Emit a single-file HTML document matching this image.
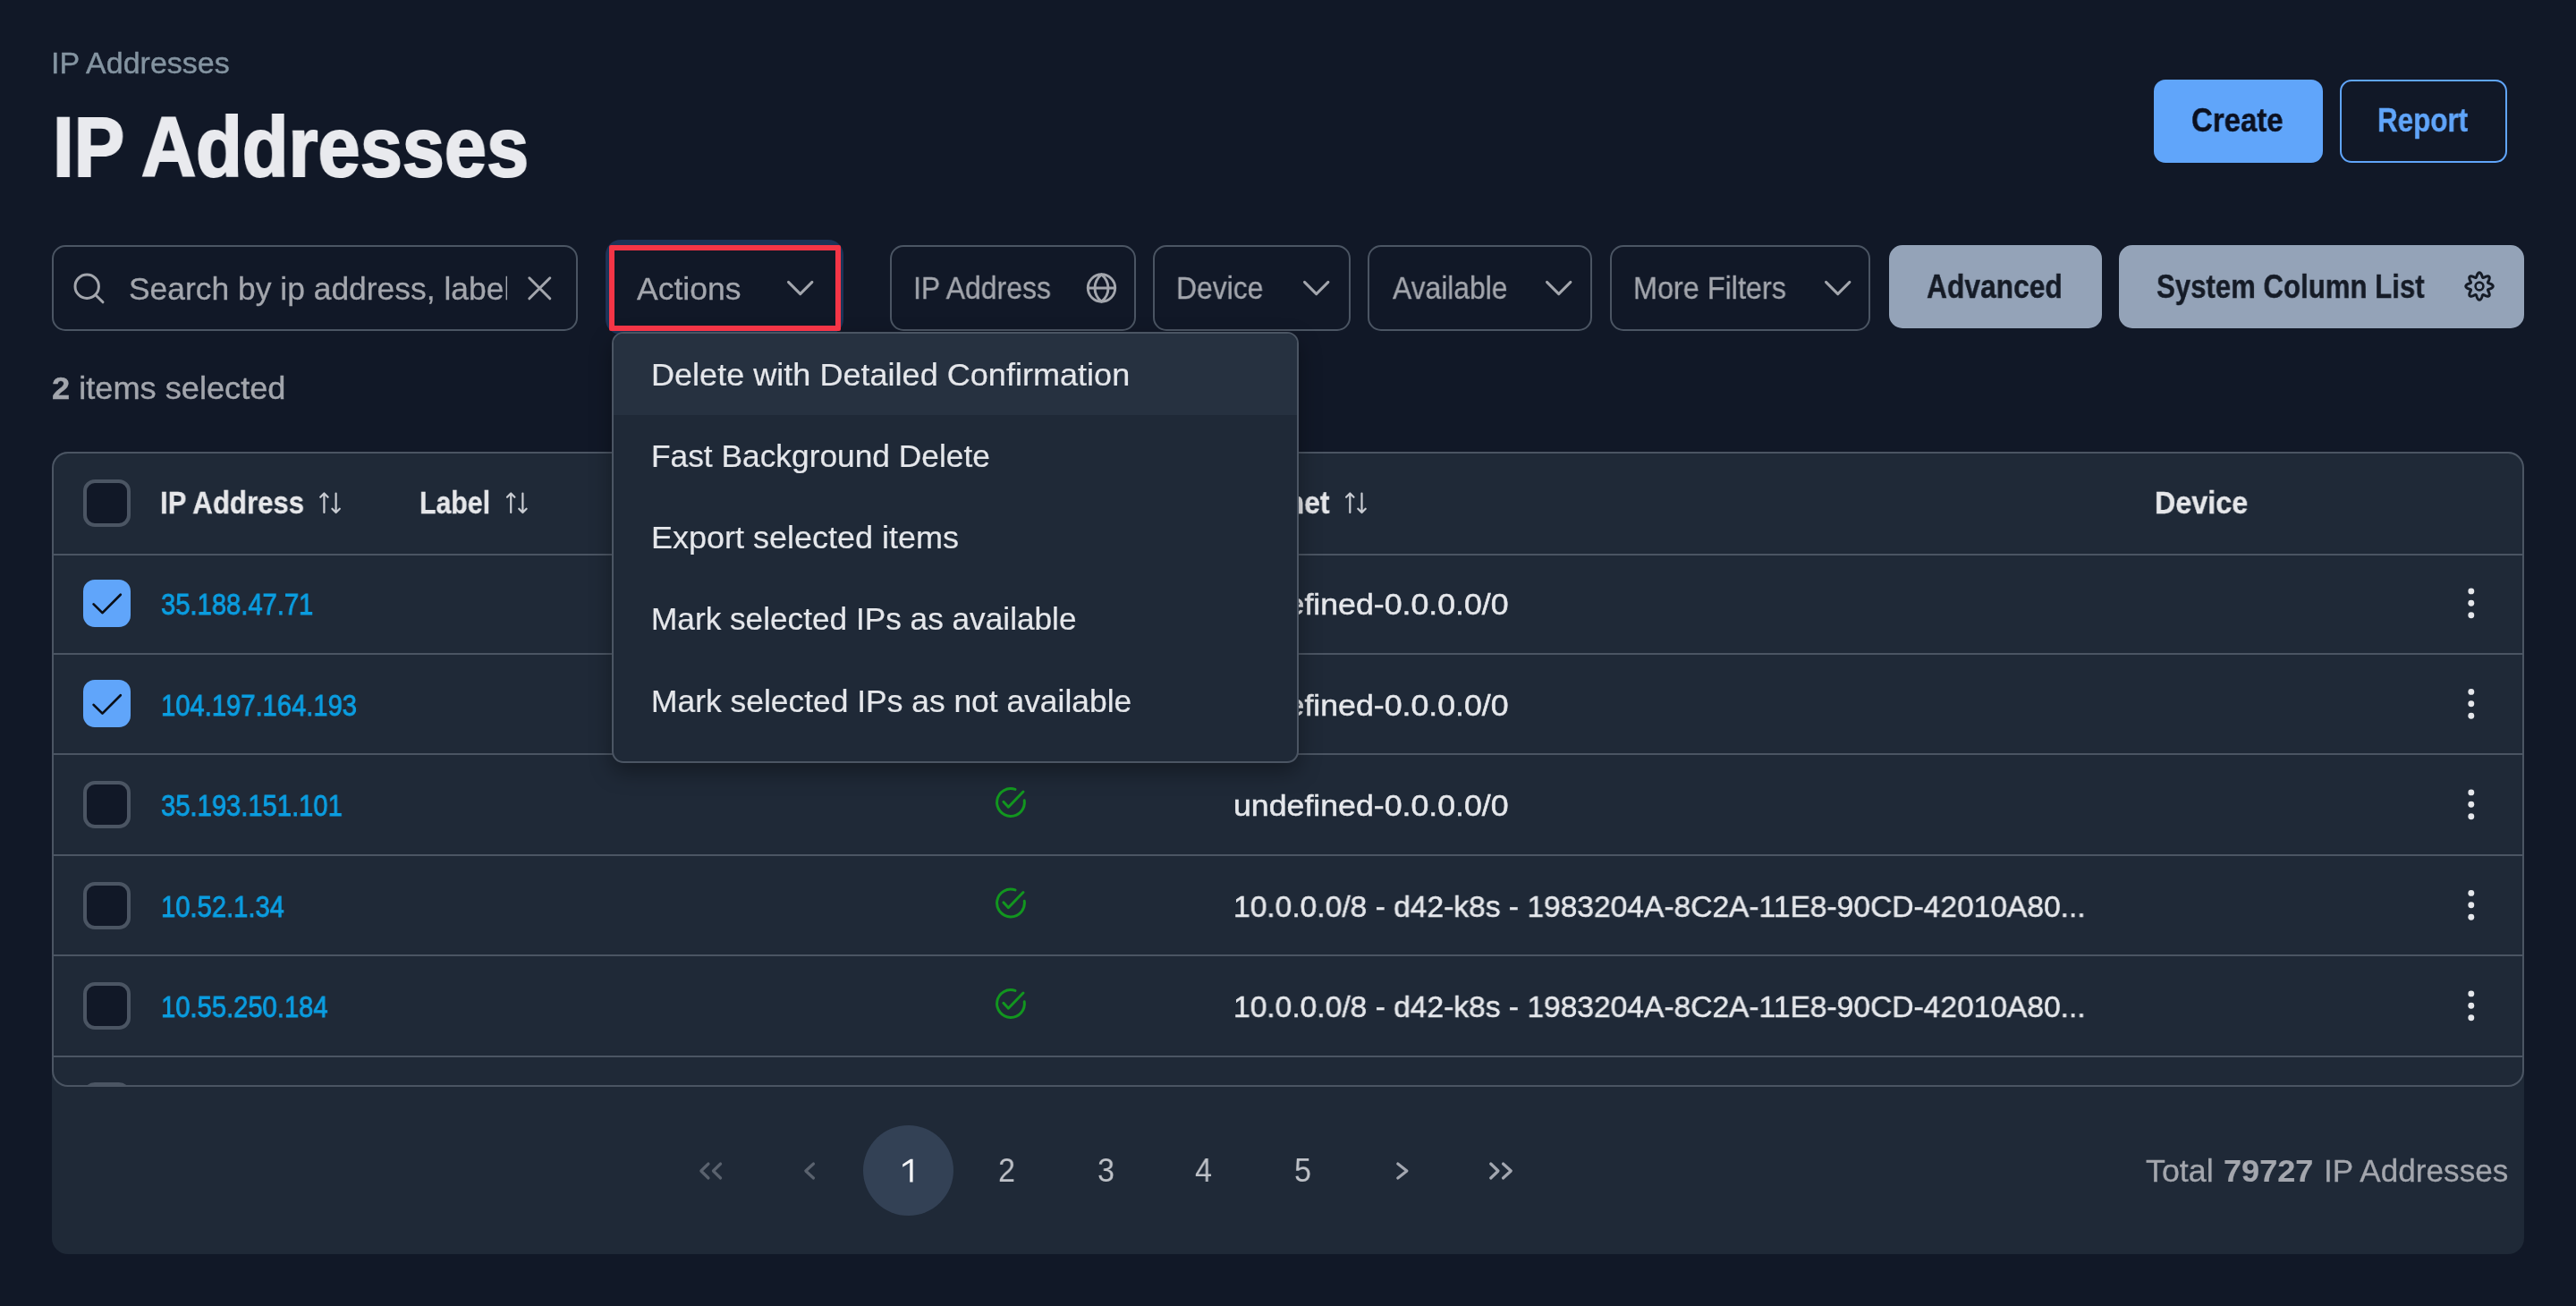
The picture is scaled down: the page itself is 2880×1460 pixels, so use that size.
<!DOCTYPE html>
<html><head><meta charset="utf-8"><title>IP Addresses</title>
<style>
html,body{margin:0;padding:0;background:#111827;}
body{width:2880px;height:1460px;position:relative;overflow:hidden;font-family:"Liberation Sans",sans-serif;}
body div, body span.t{position:absolute;}
span.t{white-space:nowrap;transform-origin:0 0;will-change:transform;}
svg{position:absolute;left:0;top:0;}
@media (max-width:2000px){html{zoom:0.5;}}
</style></head><body>
<span class="t" style="left:57.0px;top:53.2px;font-size:34px;line-height:34px;color:#8494a1;transform:scaleX(0.9980);-webkit-text-stroke:0.4px #8494a1;">IP Addresses</span>
<span class="t" style="left:58.5px;top:116.6px;font-size:95px;line-height:95px;color:#e9eaee;font-weight:700;transform:scaleX(0.8916);-webkit-text-stroke:2.2px #e9eaee;">IP Addresses</span>
<div style="left:2408px;top:89px;width:189px;height:93px;background:#60a5fa;border-radius:13px;"></div>
<span class="t" style="left:2450.0px;top:116.5px;font-size:36px;line-height:36px;color:#0b1020;font-weight:700;transform:scaleX(0.9161);-webkit-text-stroke:0.4px #0b1020;">Create</span>
<div style="left:2616px;top:89px;width:187px;height:93px;border:2px solid #60a5fa;border-radius:13px;box-sizing:border-box;"></div>
<span class="t" style="left:2657.5px;top:116.5px;font-size:36px;line-height:36px;color:#60a5fa;font-weight:700;transform:scaleX(0.8716);-webkit-text-stroke:0.4px #60a5fa;">Report</span>
<div style="left:58px;top:274px;width:588px;height:96px;border:2px solid #4b5563;border-radius:15px;box-sizing:border-box;"></div>
<div style="left:144px;top:290px;width:423px;height:60px;overflow:hidden;">
<span class="t" style="left:0.0px;top:15.4px;font-size:35px;line-height:35px;color:#a3a6ad;transform:scaleX(1.0120);-webkit-text-stroke:0.3px #a3a6ad;">Search by ip address, label</span>
</div>
<div style="left:677px;top:268px;width:266px;height:106px;background:#1d3357;border-radius:17px;"></div>
<div style="left:681px;top:274px;width:259px;height:96px;background:#111827;border:2px solid #3b82f6;border-radius:13px;box-sizing:border-box;"></div>
<span class="t" style="left:712.0px;top:304.9px;font-size:35px;line-height:35px;color:#a3a6ad;transform:scaleX(1.0148);-webkit-text-stroke:0.3px #a3a6ad;">Actions</span>
<div style="left:995px;top:274px;width:275px;height:96px;border:2px solid #4b5563;border-radius:15px;box-sizing:border-box;"></div>
<div style="left:1289px;top:274px;width:221px;height:96px;border:2px solid #4b5563;border-radius:15px;box-sizing:border-box;"></div>
<div style="left:1529px;top:274px;width:251px;height:96px;border:2px solid #4b5563;border-radius:15px;box-sizing:border-box;"></div>
<div style="left:1800px;top:274px;width:291px;height:96px;border:2px solid #4b5563;border-radius:15px;box-sizing:border-box;"></div>
<span class="t" style="left:1021.0px;top:304.4px;font-size:35px;line-height:35px;color:#a3a6ad;transform:scaleX(0.9124);-webkit-text-stroke:0.3px #a3a6ad;">IP Address</span>
<span class="t" style="left:1315.0px;top:304.4px;font-size:35px;line-height:35px;color:#a3a6ad;transform:scaleX(0.9103);-webkit-text-stroke:0.3px #a3a6ad;">Device</span>
<span class="t" style="left:1557.0px;top:304.4px;font-size:35px;line-height:35px;color:#a3a6ad;transform:scaleX(0.9078);-webkit-text-stroke:0.3px #a3a6ad;">Available</span>
<span class="t" style="left:1826.0px;top:304.4px;font-size:35px;line-height:35px;color:#a3a6ad;transform:scaleX(0.9254);-webkit-text-stroke:0.3px #a3a6ad;">More Filters</span>
<div style="left:2112px;top:274px;width:238px;height:93px;background:#94a3b8;border-radius:15px;"></div>
<div style="left:2369px;top:274px;width:453px;height:93px;background:#94a3b8;border-radius:15px;"></div>
<span class="t" style="left:2154.0px;top:302.5px;font-size:36px;line-height:36px;color:#151b26;font-weight:700;transform:scaleX(0.8826);-webkit-text-stroke:0.4px #151b26;">Advanced</span>
<span class="t" style="left:2411.0px;top:302.5px;font-size:36px;line-height:36px;color:#151b26;font-weight:700;transform:scaleX(0.8659);-webkit-text-stroke:0.4px #151b26;">System Column List</span>
<span class="t" style="left:58px;top:417.3px;font-size:34.5px;line-height:34.5px;color:#a3a6ad;transform:scaleX(1.049);-webkit-text-stroke:0.4px #a3a6ad;"><b>2</b> items selected</span>
<div style="left:58px;top:505px;width:2764px;height:897px;background:#1f2937;border-radius:18px;"></div>
<div style="left:58px;top:505px;width:2764px;height:710px;border:2px solid #4b5563;border-radius:18px;box-sizing:border-box;overflow:hidden;">
<div style="left:-2px;top:112px;width:2764px;height:2px;background:#4b5563;"></div>
<div style="left:-2px;top:223px;width:2764px;height:2px;background:#4b5563;"></div>
<div style="left:-2px;top:335px;width:2764px;height:2px;background:#4b5563;"></div>
<div style="left:-2px;top:448px;width:2764px;height:2px;background:#4b5563;"></div>
<div style="left:-2px;top:560px;width:2764px;height:2px;background:#4b5563;"></div>
<div style="left:-2px;top:673px;width:2764px;height:2px;background:#4b5563;"></div>
<div style="left:33px;top:703px;width:53px;height:53px;background:#111827;border:4px solid #4b5563;border-radius:13px;box-sizing:border-box;"></div>
</div>
<div style="left:93px;top:536px;width:53px;height:53px;background:#111827;border:4px solid #4b5563;border-radius:13px;box-sizing:border-box;"></div>
<span class="t" style="left:179.0px;top:544.4px;font-size:35px;line-height:35px;color:#e6e7ea;font-weight:700;transform:scaleX(0.8901);-webkit-text-stroke:0.3px #e6e7ea;">IP Address</span>
<span class="t" style="left:468.5px;top:544.4px;font-size:35px;line-height:35px;color:#e6e7ea;font-weight:700;transform:scaleX(0.8637);-webkit-text-stroke:0.3px #e6e7ea;">Label</span>
<span class="t" style="left:1379.0px;top:544.4px;font-size:35px;line-height:35px;color:#e6e7ea;font-weight:700;transform:scaleX(0.9050);-webkit-text-stroke:0.3px #e6e7ea;">Subnet</span>
<span class="t" style="left:2409.0px;top:544.4px;font-size:35px;line-height:35px;color:#e6e7ea;font-weight:700;transform:scaleX(0.9221);-webkit-text-stroke:0.3px #e6e7ea;">Device</span>
<div style="left:93px;top:648px;width:53px;height:53px;background:#60a5fa;border-radius:13px;"></div>
<span class="t" style="left:180.0px;top:658.4px;font-size:34px;line-height:34px;color:#0b9de0;transform:scaleX(0.8580);-webkit-text-stroke:0.9px #0b9de0;">35.188.47.71</span>
<span class="t" style="left:1379.0px;top:658.4px;font-size:34px;line-height:34px;color:#e5e7eb;transform:scaleX(1.0495);-webkit-text-stroke:0.5px #e5e7eb;">undefined-0.0.0.0/0</span>
<div style="left:93px;top:760px;width:53px;height:53px;background:#60a5fa;border-radius:13px;"></div>
<span class="t" style="left:180.0px;top:770.8px;font-size:34px;line-height:34px;color:#0b9de0;transform:scaleX(0.8580);-webkit-text-stroke:0.9px #0b9de0;">104.197.164.193</span>
<span class="t" style="left:1379.0px;top:770.8px;font-size:34px;line-height:34px;color:#e5e7eb;transform:scaleX(1.0495);-webkit-text-stroke:0.5px #e5e7eb;">undefined-0.0.0.0/0</span>
<div style="left:93px;top:873px;width:53px;height:53px;background:#111827;border:4px solid #4b5563;border-radius:13px;box-sizing:border-box;"></div>
<span class="t" style="left:180.0px;top:883.2px;font-size:34px;line-height:34px;color:#0b9de0;transform:scaleX(0.8580);-webkit-text-stroke:0.9px #0b9de0;">35.193.151.101</span>
<span class="t" style="left:1379.0px;top:883.2px;font-size:34px;line-height:34px;color:#e5e7eb;transform:scaleX(1.0495);-webkit-text-stroke:0.5px #e5e7eb;">undefined-0.0.0.0/0</span>
<div style="left:93px;top:986px;width:53px;height:53px;background:#111827;border:4px solid #4b5563;border-radius:13px;box-sizing:border-box;"></div>
<span class="t" style="left:180.0px;top:995.6px;font-size:34px;line-height:34px;color:#0b9de0;transform:scaleX(0.8580);-webkit-text-stroke:0.9px #0b9de0;">10.52.1.34</span>
<span class="t" style="left:1379.0px;top:995.6px;font-size:34px;line-height:34px;color:#e5e7eb;transform:scaleX(0.9870);-webkit-text-stroke:0.5px #e5e7eb;">10.0.0.0/8 - d42-k8s - 1983204A-8C2A-11E8-90CD-42010A80...</span>
<div style="left:93px;top:1098px;width:53px;height:53px;background:#111827;border:4px solid #4b5563;border-radius:13px;box-sizing:border-box;"></div>
<span class="t" style="left:180.0px;top:1108.0px;font-size:34px;line-height:34px;color:#0b9de0;transform:scaleX(0.8580);-webkit-text-stroke:0.9px #0b9de0;">10.55.250.184</span>
<span class="t" style="left:1379.0px;top:1108.0px;font-size:34px;line-height:34px;color:#e5e7eb;transform:scaleX(0.9870);-webkit-text-stroke:0.5px #e5e7eb;">10.0.0.0/8 - d42-k8s - 1983204A-8C2A-11E8-90CD-42010A80...</span>
<div style="left:684px;top:371px;width:768px;height:482px;background:#1f2937;border:2px solid #4b5563;border-radius:13px;box-sizing:border-box;box-shadow:0 10px 24px rgba(0,0,0,0.35);"></div>
<div style="left:686px;top:373px;width:764px;height:91px;background:#263140;border-radius:11px 11px 0 0;"></div>
<span class="t" style="left:728.0px;top:400.7px;font-size:35px;line-height:35px;color:#e5e7eb;transform:scaleX(1.0304);-webkit-text-stroke:0.2px #e5e7eb;">Delete with Detailed Confirmation</span>
<span class="t" style="left:728.0px;top:491.7px;font-size:35px;line-height:35px;color:#e5e7eb;transform:scaleX(1.0090);-webkit-text-stroke:0.2px #e5e7eb;">Fast Background Delete</span>
<span class="t" style="left:728.0px;top:582.8px;font-size:35px;line-height:35px;color:#e5e7eb;transform:scaleX(1.0281);-webkit-text-stroke:0.2px #e5e7eb;">Export selected items</span>
<span class="t" style="left:728.0px;top:674.3px;font-size:35px;line-height:35px;color:#e5e7eb;transform:scaleX(1.0059);-webkit-text-stroke:0.2px #e5e7eb;">Mark selected IPs as available</span>
<span class="t" style="left:728.0px;top:765.6px;font-size:35px;line-height:35px;color:#e5e7eb;transform:scaleX(1.0115);-webkit-text-stroke:0.2px #e5e7eb;">Mark selected IPs as not available</span>
<div style="left:965px;top:1258px;width:101px;height:101px;background:#334155;border-radius:50%;"></div>
<span class="t" style="left:1115.5px;top:1291.0px;font-size:36px;line-height:36px;color:#bfc2c8;transform:scaleX(0.9500);">2</span>
<span class="t" style="left:1226.5px;top:1291.0px;font-size:36px;line-height:36px;color:#bfc2c8;transform:scaleX(0.9500);">3</span>
<span class="t" style="left:1336.0px;top:1291.0px;font-size:36px;line-height:36px;color:#bfc2c8;transform:scaleX(0.9500);">4</span>
<span class="t" style="left:1446.5px;top:1291.0px;font-size:36px;line-height:36px;color:#bfc2c8;transform:scaleX(0.9500);">5</span>
<span class="t" style="left:2399.0px;top:1291.4px;font-size:35px;line-height:35px;color:#a3a6ad;transform:scaleX(1.0230);-webkit-text-stroke:0.3px #a3a6ad;">Total</span>
<span class="t" style="left:2486.0px;top:1291.4px;font-size:35px;line-height:35px;color:#a3a6ad;font-weight:700;transform:scaleX(1.0309);-webkit-text-stroke:0.2px #a3a6ad;">79727</span>
<span class="t" style="left:2597.5px;top:1291.4px;font-size:35px;line-height:35px;color:#a3a6ad;transform:scaleX(1.0034);-webkit-text-stroke:0.3px #a3a6ad;">IP Addresses</span>
<svg width="2880" height="1460" viewBox="0 0 2880 1460">
<circle cx="97.2" cy="320.2" r="13.2" stroke="#a3a6ad" stroke-width="3" fill="none"/>
<path d="M106.8 329.8 L115 337.8" stroke="#a3a6ad" stroke-width="3" fill="none" stroke-linecap="round" stroke-linejoin="round"/>
<path d="M591.8 310.8 L614.8 333.8 M614.8 310.8 L591.8 333.8" stroke="#a3a6ad" stroke-width="3" fill="none" stroke-linecap="round" stroke-linejoin="round"/>
<path d="M881.5 315.4 L894.7 328.6 L907.9 315.4" stroke="#a3a6ad" stroke-width="3" fill="none" stroke-linecap="round" stroke-linejoin="round"/>
<path d="M1458.5 315.4 L1471.7 328.6 L1484.9 315.4" stroke="#a3a6ad" stroke-width="3" fill="none" stroke-linecap="round" stroke-linejoin="round"/>
<path d="M1729.5 315.4 L1742.7 328.6 L1755.9 315.4" stroke="#a3a6ad" stroke-width="3" fill="none" stroke-linecap="round" stroke-linejoin="round"/>
<path d="M2041.5 315.4 L2054.7 328.6 L2067.9 315.4" stroke="#a3a6ad" stroke-width="3" fill="none" stroke-linecap="round" stroke-linejoin="round"/>
<circle cx="1231.5" cy="322" r="15.2" stroke="#a3a6ad" stroke-width="2.9" fill="none"/>
<path d="M1216.3 322 H1246.7" stroke="#a3a6ad" stroke-width="2.9" fill="none" stroke-linecap="round" stroke-linejoin="round"/>
<path d="M1231.5 306.8 C1221.5 315 1221.5 329 1231.5 337.2 C1241.5 329 1241.5 315 1231.5 306.8" stroke="#a3a6ad" stroke-width="2.9" fill="none" stroke-linecap="round" stroke-linejoin="round"/>
<path d="M2787.20 320.00 L2787.17 320.30 L2787.08 320.59 L2786.93 320.88 L2786.73 321.16 L2786.48 321.43 L2786.18 321.68 L2785.85 321.92 L2785.48 322.13 L2785.09 322.34 L2784.68 322.52 L2784.26 322.69 L2783.85 322.84 L2783.44 322.99 L2783.05 323.12 L2782.69 323.24 L2782.36 323.37 L2782.07 323.49 L2781.83 323.63 L2781.64 323.77 L2781.52 323.94 L2781.48 324.15 L2781.51 324.38 L2781.59 324.65 L2781.70 324.94 L2781.85 325.27 L2782.02 325.61 L2782.20 325.98 L2782.39 326.37 L2782.57 326.77 L2782.75 327.18 L2782.91 327.60 L2783.04 328.02 L2783.14 328.44 L2783.22 328.84 L2783.25 329.23 L2783.24 329.60 L2783.18 329.94 L2783.08 330.24 L2782.94 330.52 L2782.75 330.75 L2782.52 330.94 L2782.24 331.08 L2781.94 331.18 L2781.60 331.24 L2781.23 331.25 L2780.84 331.22 L2780.44 331.14 L2780.02 331.04 L2779.60 330.91 L2779.18 330.75 L2778.77 330.57 L2778.37 330.39 L2777.98 330.20 L2777.61 330.02 L2777.27 329.85 L2776.94 329.70 L2776.65 329.59 L2776.38 329.51 L2776.15 329.48 L2775.94 329.52 L2775.77 329.64 L2775.63 329.83 L2775.49 330.07 L2775.37 330.36 L2775.24 330.69 L2775.12 331.05 L2774.99 331.44 L2774.84 331.85 L2774.69 332.26 L2774.52 332.68 L2774.34 333.09 L2774.13 333.48 L2773.92 333.85 L2773.68 334.18 L2773.43 334.48 L2773.16 334.73 L2772.88 334.93 L2772.59 335.08 L2772.30 335.17 L2772.00 335.20 L2771.70 335.17 L2771.41 335.08 L2771.12 334.93 L2770.84 334.73 L2770.57 334.48 L2770.32 334.18 L2770.08 333.85 L2769.87 333.48 L2769.66 333.09 L2769.48 332.68 L2769.31 332.26 L2769.16 331.85 L2769.01 331.44 L2768.88 331.05 L2768.76 330.69 L2768.63 330.36 L2768.51 330.07 L2768.37 329.83 L2768.23 329.64 L2768.06 329.52 L2767.85 329.48 L2767.62 329.51 L2767.35 329.59 L2767.06 329.70 L2766.73 329.85 L2766.39 330.02 L2766.02 330.20 L2765.63 330.39 L2765.23 330.57 L2764.82 330.75 L2764.40 330.91 L2763.98 331.04 L2763.56 331.14 L2763.16 331.22 L2762.77 331.25 L2762.40 331.24 L2762.06 331.18 L2761.76 331.08 L2761.48 330.94 L2761.25 330.75 L2761.06 330.52 L2760.92 330.24 L2760.82 329.94 L2760.76 329.60 L2760.75 329.23 L2760.78 328.84 L2760.86 328.44 L2760.96 328.02 L2761.09 327.60 L2761.25 327.18 L2761.43 326.77 L2761.61 326.37 L2761.80 325.98 L2761.98 325.61 L2762.15 325.27 L2762.30 324.94 L2762.41 324.65 L2762.49 324.38 L2762.52 324.15 L2762.48 323.94 L2762.36 323.77 L2762.17 323.63 L2761.93 323.49 L2761.64 323.37 L2761.31 323.24 L2760.95 323.12 L2760.56 322.99 L2760.15 322.84 L2759.74 322.69 L2759.32 322.52 L2758.91 322.34 L2758.52 322.13 L2758.15 321.92 L2757.82 321.68 L2757.52 321.43 L2757.27 321.16 L2757.07 320.88 L2756.92 320.59 L2756.83 320.30 L2756.80 320.00 L2756.83 319.70 L2756.92 319.41 L2757.07 319.12 L2757.27 318.84 L2757.52 318.57 L2757.82 318.32 L2758.15 318.08 L2758.52 317.87 L2758.91 317.66 L2759.32 317.48 L2759.74 317.31 L2760.15 317.16 L2760.56 317.01 L2760.95 316.88 L2761.31 316.76 L2761.64 316.63 L2761.93 316.51 L2762.17 316.37 L2762.36 316.23 L2762.48 316.06 L2762.52 315.85 L2762.49 315.62 L2762.41 315.35 L2762.30 315.06 L2762.15 314.73 L2761.98 314.39 L2761.80 314.02 L2761.61 313.63 L2761.43 313.23 L2761.25 312.82 L2761.09 312.40 L2760.96 311.98 L2760.86 311.56 L2760.78 311.16 L2760.75 310.77 L2760.76 310.40 L2760.82 310.06 L2760.92 309.76 L2761.06 309.48 L2761.25 309.25 L2761.48 309.06 L2761.76 308.92 L2762.06 308.82 L2762.40 308.76 L2762.77 308.75 L2763.16 308.78 L2763.56 308.86 L2763.98 308.96 L2764.40 309.09 L2764.82 309.25 L2765.23 309.43 L2765.63 309.61 L2766.02 309.80 L2766.39 309.98 L2766.73 310.15 L2767.06 310.30 L2767.35 310.41 L2767.62 310.49 L2767.85 310.52 L2768.06 310.48 L2768.23 310.36 L2768.37 310.17 L2768.51 309.93 L2768.63 309.64 L2768.76 309.31 L2768.88 308.95 L2769.01 308.56 L2769.16 308.15 L2769.31 307.74 L2769.48 307.32 L2769.66 306.91 L2769.87 306.52 L2770.08 306.15 L2770.32 305.82 L2770.57 305.52 L2770.84 305.27 L2771.12 305.07 L2771.41 304.92 L2771.70 304.83 L2772.00 304.80 L2772.30 304.83 L2772.59 304.92 L2772.88 305.07 L2773.16 305.27 L2773.43 305.52 L2773.68 305.82 L2773.92 306.15 L2774.13 306.52 L2774.34 306.91 L2774.52 307.32 L2774.69 307.74 L2774.84 308.15 L2774.99 308.56 L2775.12 308.95 L2775.24 309.31 L2775.37 309.64 L2775.49 309.93 L2775.63 310.17 L2775.77 310.36 L2775.94 310.48 L2776.15 310.52 L2776.38 310.49 L2776.65 310.41 L2776.94 310.30 L2777.27 310.15 L2777.61 309.98 L2777.98 309.80 L2778.37 309.61 L2778.77 309.43 L2779.18 309.25 L2779.60 309.09 L2780.02 308.96 L2780.44 308.86 L2780.84 308.78 L2781.23 308.75 L2781.60 308.76 L2781.94 308.82 L2782.24 308.92 L2782.52 309.06 L2782.75 309.25 L2782.94 309.48 L2783.08 309.76 L2783.18 310.06 L2783.24 310.40 L2783.25 310.77 L2783.22 311.16 L2783.14 311.56 L2783.04 311.98 L2782.91 312.40 L2782.75 312.82 L2782.57 313.23 L2782.39 313.63 L2782.20 314.02 L2782.02 314.39 L2781.85 314.73 L2781.70 315.06 L2781.59 315.35 L2781.51 315.62 L2781.48 315.85 L2781.52 316.06 L2781.64 316.23 L2781.83 316.37 L2782.07 316.51 L2782.36 316.63 L2782.69 316.76 L2783.05 316.88 L2783.44 317.01 L2783.85 317.16 L2784.26 317.31 L2784.68 317.48 L2785.09 317.66 L2785.48 317.87 L2785.85 318.08 L2786.18 318.32 L2786.48 318.57 L2786.73 318.84 L2786.93 319.12 L2787.08 319.41 L2787.17 319.70 L2787.20 320.00Z" stroke="#151b26" stroke-width="3" fill="none" stroke-linecap="round" stroke-linejoin="round"/>
<circle cx="2772" cy="320" r="4.4" stroke="#151b26" stroke-width="2.6" fill="none"/>
<path d="M362.4 551.5 V573 M358.2 555.8 L362.4 551.5 L366.59999999999997 555.8" stroke="#c9ccd2" stroke-width="2.2" fill="none" stroke-linecap="round" stroke-linejoin="round"/>
<path d="M375.6 551.5 V573 M371.40000000000003 568.7 L375.6 573 L379.8 568.7" stroke="#c9ccd2" stroke-width="2.2" fill="none" stroke-linecap="round" stroke-linejoin="round"/>
<path d="M571.2 551.5 V573 M567.0 555.8 L571.2 551.5 L575.4000000000001 555.8" stroke="#c9ccd2" stroke-width="2.2" fill="none" stroke-linecap="round" stroke-linejoin="round"/>
<path d="M584.4000000000001 551.5 V573 M580.2 568.7 L584.4000000000001 573 L588.6000000000001 568.7" stroke="#c9ccd2" stroke-width="2.2" fill="none" stroke-linecap="round" stroke-linejoin="round"/>
<path d="M1509.3000000000002 551.5 V573 M1505.1000000000001 555.8 L1509.3000000000002 551.5 L1513.5000000000002 555.8" stroke="#c9ccd2" stroke-width="2.2" fill="none" stroke-linecap="round" stroke-linejoin="round"/>
<path d="M1522.5 551.5 V573 M1518.3 568.7 L1522.5 573 L1526.7 568.7" stroke="#c9ccd2" stroke-width="2.2" fill="none" stroke-linecap="round" stroke-linejoin="round"/>
<path d="M104.6 675.4 L114.5 685.1 L134.8 664.8" stroke="#0b0f17" stroke-width="2.7" fill="none" stroke-linecap="round" stroke-linejoin="round"/>
<path d="M104.6 787.9 L114.5 797.6 L134.8 777.3" stroke="#0b0f17" stroke-width="2.7" fill="none" stroke-linecap="round" stroke-linejoin="round"/>
<path d="M1145.25 894.86 A15.4 15.4 0 1 1 1135.01 882.44" stroke="#12961f" stroke-width="3" fill="none" stroke-linecap="round" stroke-linejoin="round"/>
<path d="M1121.9 896.30 L1127.4 902.20 L1144 885.00" stroke="#12961f" stroke-width="3" fill="none" stroke-linecap="round" stroke-linejoin="round"/>
<path d="M1145.25 1007.36 A15.4 15.4 0 1 1 1135.01 994.94" stroke="#12961f" stroke-width="3" fill="none" stroke-linecap="round" stroke-linejoin="round"/>
<path d="M1121.9 1008.80 L1127.4 1014.70 L1144 997.50" stroke="#12961f" stroke-width="3" fill="none" stroke-linecap="round" stroke-linejoin="round"/>
<path d="M1145.25 1119.86 A15.4 15.4 0 1 1 1135.01 1107.44" stroke="#12961f" stroke-width="3" fill="none" stroke-linecap="round" stroke-linejoin="round"/>
<path d="M1121.9 1121.30 L1127.4 1127.20 L1144 1110.00" stroke="#12961f" stroke-width="3" fill="none" stroke-linecap="round" stroke-linejoin="round"/>
<circle cx="2762.8" cy="660.9" r="3.45" fill="#e5e7eb"/>
<circle cx="2762.8" cy="674.3" r="3.45" fill="#e5e7eb"/>
<circle cx="2762.8" cy="687.7" r="3.45" fill="#e5e7eb"/>
<circle cx="2762.8" cy="773.4" r="3.45" fill="#e5e7eb"/>
<circle cx="2762.8" cy="786.8" r="3.45" fill="#e5e7eb"/>
<circle cx="2762.8" cy="800.2" r="3.45" fill="#e5e7eb"/>
<circle cx="2762.8" cy="885.9" r="3.45" fill="#e5e7eb"/>
<circle cx="2762.8" cy="899.3" r="3.45" fill="#e5e7eb"/>
<circle cx="2762.8" cy="912.7" r="3.45" fill="#e5e7eb"/>
<circle cx="2762.8" cy="998.4" r="3.45" fill="#e5e7eb"/>
<circle cx="2762.8" cy="1011.8" r="3.45" fill="#e5e7eb"/>
<circle cx="2762.8" cy="1025.2" r="3.45" fill="#e5e7eb"/>
<circle cx="2762.8" cy="1110.9" r="3.45" fill="#e5e7eb"/>
<circle cx="2762.8" cy="1124.3" r="3.45" fill="#e5e7eb"/>
<circle cx="2762.8" cy="1137.7" r="3.45" fill="#e5e7eb"/>
<path d="M1017.2 1321.6 L1020.6 1321.6 L1020.6 1295.8 L1017.9 1295.8 L1009.2 1301.4 L1009.2 1304.8 L1017.2 1299.8 Z" fill="#f3f4f6"/>
<path d="M792 1301 L783.8 1309 L792 1317 M805.6 1301 L797.4 1309 L805.6 1317" stroke="#5a626e" stroke-width="3.2" fill="none" stroke-linecap="round" stroke-linejoin="round"/>
<path d="M909.5 1301 L900.8 1309 L909.5 1317" stroke="#5a626e" stroke-width="3.2" fill="none" stroke-linecap="round" stroke-linejoin="round"/>
<path d="M1562.8 1301 L1572.9 1309 L1562.8 1317" stroke="#a3a7b0" stroke-width="3.2" fill="none" stroke-linecap="round" stroke-linejoin="round"/>
<path d="M1666.7 1301 L1675 1309 L1666.7 1317 M1680.5 1301 L1689.3 1309 L1680.5 1317" stroke="#a3a7b0" stroke-width="3.2" fill="none" stroke-linecap="round" stroke-linejoin="round"/>
</svg>
<div style="left:681px;top:274px;width:259px;height:96px;border:6px solid #f53546;border-radius:2px;box-sizing:border-box;"></div>
</body></html>
